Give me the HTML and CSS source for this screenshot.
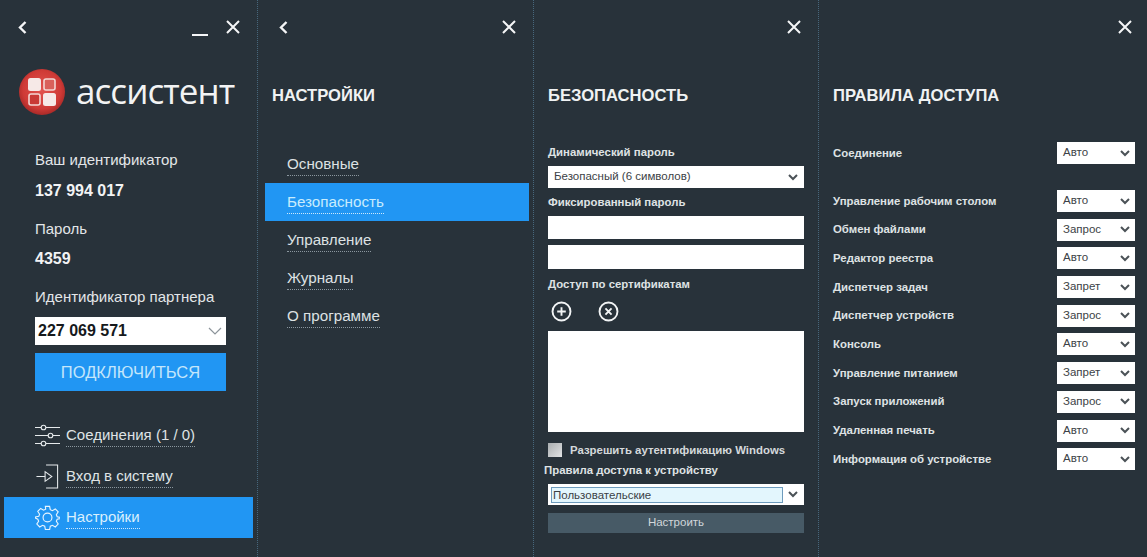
FILE: index.html
```html
<!DOCTYPE html>
<html lang="ru">
<head>
<meta charset="utf-8">
<title>Ассистент</title>
<link rel="stylesheet" href="styles.css">
</head>
<body>
<svg class="defs" width="0" height="0" aria-hidden="true">
  <defs>
    <symbol id="chev" viewBox="0 0 10 7"><path d="M1 1l4 4 4-4" fill="none" stroke="currentColor" stroke-width="2"/></symbol>
    <symbol id="close" viewBox="0 0 14 14"><path d="M1 1l12 12M13 1L1 13" fill="none" stroke="currentColor" stroke-width="2"/></symbol>
    <symbol id="back" viewBox="0 0 9 13"><path d="M7.5 1L2 6.5 7.5 12" fill="none" stroke="currentColor" stroke-width="2.4"/></symbol>
  </defs>
</svg>
<main class="app">
  <section class="panel panel-main">
    <div class="topbar topbar-main">
      <svg class="ico-back"><use href="#back"/></svg>
      <span class="minimize"></span>
      <svg class="ico-close close-main"><use href="#close"/></svg>
    </div>
    <div class="logo">
      <svg class="logo-mark" viewBox="0 0 46 46">
        <defs>
          <radialGradient id="lg" cx="50%" cy="45%" r="55%"><stop offset="0" stop-color="#e2544f"/><stop offset="0.75" stop-color="#cf3a36"/><stop offset="1" stop-color="#a92a28"/></radialGradient>
        </defs>
        <circle cx="23" cy="23" r="23" fill="url(#lg)"/>
        <rect x="9" y="9" width="13" height="13" rx="2.5" fill="#f6e9e7"/>
        <rect x="25" y="10" width="11" height="11" rx="2" fill="#d9615b" stroke="#f3d6d3" stroke-width="1.6"/>
        <rect x="10" y="25" width="11" height="11" rx="2" fill="#c93a36" stroke="#f3d6d3" stroke-width="1.6"/>
        <rect x="24" y="24" width="13" height="13" rx="2.5" fill="#f6e9e7"/>
      </svg>
      <span class="logo-text">ассистент</span>
    </div>
    <div class="info">
      <div class="info-label first">Ваш идентификатор</div>
      <div class="info-value">137 994 017</div>
      <div class="info-label">Пароль</div>
      <div class="info-value">4359</div>
      <div class="info-label">Идентификатор партнера</div>
      <div class="partner">
        <span>227 069 571</span>
        <svg class="partner-chev" viewBox="0 0 14 8"><path d="M1 1l6 6 6-6" fill="none" stroke="currentColor" stroke-width="1.2"/></svg>
      </div>
      <div class="connect">ПОДКЛЮЧИТЬСЯ</div>
    </div>
    <nav class="side-nav">
      <div class="side-item">
        <svg class="side-ico" viewBox="0 0 25 22" fill="none" stroke="#e6eaec" stroke-width="1.1">
          <path d="M0 3h6M11 3h14M0 11h13M18 11h7M0 19h6M11 19h14"/>
          <circle cx="8.5" cy="3" r="2.3"/><circle cx="15.5" cy="11" r="2.3"/><circle cx="8.5" cy="19" r="2.3"/>
        </svg>
        <span class="dotted">Соединения (1 / 0)</span>
      </div>
      <div class="side-item">
        <svg class="side-ico" viewBox="0 0 25 26" fill="none" stroke="#e6eaec" stroke-width="1.1">
          <path d="M11 1h12v24H11M1 13h9"/><path d="M10 8l7 5-7 5z"/>
        </svg>
        <span class="dotted">Вход в систему</span>
      </div>
      <div class="side-item active">
        <svg class="side-ico" viewBox="0 0 26 26" fill="none" stroke="#e8f4fe" stroke-width="1.2">
          <circle cx="13" cy="13" r="4.6"/>
          <path d="M10.8 1.5h4.4l.7 3.4 2.2 1 3-1.8 3 3.1-1.9 2.9.9 2.2 3.4.7v1l-3.4.7-.9 2.2 1.9 2.9-3 3.1-3-1.8-2.2 1-.7 3.4h-4.4l-.7-3.4-2.2-1-3 1.8-3-3.1 1.9-2.9-.9-2.2L.5 13.5v-1l3.4-.7.9-2.2-1.9-2.9 3-3.1 3 1.8 2.2-1z"/>
        </svg>
        <span class="dotted">Настройки</span>
      </div>
    </nav>
  </section>

  <section class="panel panel-settings">
    <div class="topbar topbar-settings">
      <svg class="ico-back"><use href="#back"/></svg>
      <svg class="ico-close"><use href="#close"/></svg>
    </div>
    <h2 class="title title-settings">НАСТРОЙКИ</h2>
    <ul class="menu">
      <li class="menu-item"><span class="dotted">Основные</span></li>
      <li class="menu-item active"><span class="dotted">Безопасность</span></li>
      <li class="menu-item"><span class="dotted">Управление</span></li>
      <li class="menu-item"><span class="dotted">Журналы</span></li>
      <li class="menu-item"><span class="dotted">О программе</span></li>
    </ul>
  </section>

  <section class="panel panel-security">
    <div class="topbar topbar-security">
      <svg class="ico-close"><use href="#close"/></svg>
    </div>
    <h2 class="title">БЕЗОПАСНОСТЬ</h2>
    <div class="form">
      <div class="f-label f-first">Динамический пароль</div>
      <div class="select select-wide"><span>Безопасный (6 символов)</span><svg class="chev"><use href="#chev"/></svg></div>
      <div class="f-label">Фиксированный пароль</div>
      <div class="field field-a"></div>
      <div class="field field-b"></div>
      <div class="f-label f-cert">Доступ по сертификатам</div>
      <div class="cert-tools">
        <svg class="cert-ico" viewBox="0 0 22 22" fill="none" stroke="#f2f4f5" stroke-width="2"><circle cx="11" cy="11" r="9.4"/><path d="M11 6.5v9M6.5 11h9"/></svg>
        <svg class="cert-ico" viewBox="0 0 22 22" fill="none" stroke="#f2f4f5" stroke-width="2"><circle cx="11" cy="11" r="9.4"/><path d="M7.8 7.8l6.4 6.4M14.2 7.8l-6.4 6.4"/></svg>
      </div>
      <div class="cert-list"></div>
      <div class="check-row"><span class="check"></span><span>Разрешить аутентификацию Windows</span></div>
      <div class="f-label f-rules">Правила доступа к устройству</div>
      <div class="select select-focus"><span class="focus-text">Пользовательские</span><svg class="chev"><use href="#chev"/></svg></div>
      <div class="setup">Настроить</div>
    </div>
  </section>

  <section class="panel panel-rules">
    <div class="topbar topbar-rules">
      <svg class="ico-close"><use href="#close"/></svg>
    </div>
    <h2 class="title">ПРАВИЛА ДОСТУПА</h2>
    <div class="rule rule-first"><span class="rule-name">Соединение</span><div class="select select-small"><span>Авто</span><svg class="chev"><use href="#chev"/></svg></div></div>
    <div class="rules">
      <div class="rule"><span class="rule-name">Управление рабочим столом</span><div class="select select-small"><span>Авто</span><svg class="chev"><use href="#chev"/></svg></div></div>
      <div class="rule"><span class="rule-name">Обмен файлами</span><div class="select select-small"><span>Запрос</span><svg class="chev"><use href="#chev"/></svg></div></div>
      <div class="rule"><span class="rule-name">Редактор реестра</span><div class="select select-small"><span>Авто</span><svg class="chev"><use href="#chev"/></svg></div></div>
      <div class="rule"><span class="rule-name">Диспетчер задач</span><div class="select select-small"><span>Запрет</span><svg class="chev"><use href="#chev"/></svg></div></div>
      <div class="rule"><span class="rule-name">Диспетчер устройств</span><div class="select select-small"><span>Запрос</span><svg class="chev"><use href="#chev"/></svg></div></div>
      <div class="rule"><span class="rule-name">Консоль</span><div class="select select-small"><span>Авто</span><svg class="chev"><use href="#chev"/></svg></div></div>
      <div class="rule"><span class="rule-name">Управление питанием</span><div class="select select-small"><span>Запрет</span><svg class="chev"><use href="#chev"/></svg></div></div>
      <div class="rule"><span class="rule-name">Запуск приложений</span><div class="select select-small"><span>Запрос</span><svg class="chev"><use href="#chev"/></svg></div></div>
      <div class="rule"><span class="rule-name">Удаленная печать</span><div class="select select-small"><span>Авто</span><svg class="chev"><use href="#chev"/></svg></div></div>
      <div class="rule"><span class="rule-name">Информация об устройстве</span><div class="select select-small"><span>Авто</span><svg class="chev"><use href="#chev"/></svg></div></div>
    </div>
  </section>
</main>
</body>
</html>
```
FILE: styles.css
```css
* { box-sizing: border-box; }
html, body { margin: 0; padding: 0; height: 100%; }
body {
  background: #28323a;
  color: #e6e9eb;
  font-family: "Liberation Sans", Arial, sans-serif;
  overflow: hidden;
}
.defs { position: absolute; }
.app { display: flex; height: 557px; width: 1147px; }
.panel { height: 100%; }
.panel-main { width: 257px; padding: 0 31px 0 35px; }
.panel-settings { width: 276px; border-left: 1px dotted #47677c; }
.panel-security { width: 285px; border-left: 1px dotted #47677c; padding: 0 14px 0 14px; }
.panel-rules { flex: 1; border-left: 1px dotted #47677c; padding: 0 12px 0 14px; }

.topbar { display: flex; align-items: center; justify-content: space-between; height: 54px; color: #f5f6f7; }
.topbar-main { margin: 0 -14px 0 -17px; }
.topbar-settings { padding: 0 17px 0 21px; }
.topbar-security { justify-content: flex-end; padding-right: 3px; }
.topbar-rules { justify-content: flex-end; padding-right: 3px; }
.ico-back { width: 9px; height: 13px; }
.ico-close { width: 14px; height: 14px; }
.minimize { width: 16px; height: 2px; background: #f5f6f7; margin: 15px 18px 0 auto; }
.close-main { margin-left: 0; }

.logo { display: flex; align-items: center; gap: 11px; margin: 15px 0 0 -16px; height: 46px; }
.logo-mark { width: 46px; height: 46px; flex: none; }
.logo-text { font-family: "Open Sans", sans-serif; font-size: 35px; font-weight: 400; line-height: 44px; padding-bottom: 2px; color: #f2f3f3; letter-spacing: -0.95px; white-space: nowrap; }

.info-label { font-size: 15px; line-height: 20px; margin-top: 18px; color: #e3e6e8; white-space: nowrap; }
.info-label.first { margin-top: 35px; }
.info-value { font-size: 16px; font-weight: 700; line-height: 20px; margin-top: 10.5px; color: #f2f3f4; }
.partner { display: flex; align-items: center; justify-content: space-between; height: 28px; margin-top: 10px; padding: 0 3px; background: #fff; color: #16191c; font-size: 16px; font-weight: 700; }
.partner-chev { width: 14px; height: 8px; color: #8c949a; margin-right: 1px; }
.connect { height: 38px; margin-top: 8px; background: #2196f3; color: #c4e6fb; font-size: 16.5px; line-height: 38px; text-align: center; }

.side-nav { margin: 24px -27px 0 -31px; }
.side-item { display: flex; align-items: center; height: 41px; padding-left: 31px; font-size: 15px; color: #dfe3e5; }
.side-item.active { background: #2196f3; color: #d9effd; }
.side-item .dotted { margin-top: 2px; }
.side-ico { width: 25px; height: 25px; margin-right: 6px; flex: none; }
.dotted { border-bottom: 1px dotted #8b979f; line-height: 18px; padding-bottom: 2px; white-space: nowrap; }
.active .dotted { border-bottom-color: #cbe7fb; }

.title { margin: 32px 0 0; font-size: 16.6px; line-height: 20px; font-weight: 700; color: #f0f2f3; white-space: nowrap; }
.title-settings { margin-left: 14px; }

.menu { list-style: none; margin: 39px 4px 0 7px; padding: 0; }
.menu-item { height: 38px; padding: 2px 0 0 22px; display: flex; align-items: center; font-size: 15.2px; color: #dde1e3; }
.menu-item.active { background: #2196f3; color: #c8ecfd; }

.f-label { font-size: 11.4px; font-weight: 700; line-height: 16px; margin-top: 6px; color: #dfe2e4; white-space: nowrap; }
.f-first { margin-top: 38px; }
.f-cert { margin-top: 7px; }
.f-rules { margin: 5px 0 0 -4px; }
.select { display: flex; align-items: center; justify-content: space-between; background: #fff; color: #3c4246; font-size: 11.5px; }
.select-wide span, .select-small span { padding-bottom: 2px; }
.chev { width: 10px; height: 7px; color: #4b5257; flex: none; }
.select-wide { height: 22px; margin-top: 6px; padding: 0 6px; }
.field { background: #fff; margin-top: 6px; }
.field-a { height: 23px; }
.field-b { height: 24px; }
.cert-tools { display: flex; gap: 26px; margin: 9px 0 0 3px; height: 21px; }
.cert-ico { width: 21px; height: 21px; }
.cert-list { height: 101px; margin-top: 9px; background: #fff; }
.check-row { display: flex; align-items: center; gap: 8px; height: 14px; margin-top: 11px; font-size: 11.4px; font-weight: 700; color: #d5d9dc; white-space: nowrap; }
.check { width: 14px; height: 14px; background: linear-gradient(135deg, #a9adb0, #e2e3e4); flex: none; }
.select-focus { height: 21px; margin-top: 6px; padding: 0 6px 0 3px; }
.focus-text { display: block; width: 232px; height: 16px; padding-left: 1px; line-height: 14px; background: #e3f6fd; border: 1px solid #6d9bbd; color: #3a4146; }
.setup { height: 20px; margin-top: 8px; background: #475a66; color: #d2d7da; font-size: 11.5px; font-weight: 400; line-height: 19px; text-align: center; }

.rule { display: flex; align-items: center; justify-content: space-between; height: 22px; font-size: 11.4px; font-weight: 700; color: #dfe2e4; white-space: nowrap; }
.rule-name { padding-bottom: 1px; }
.rule-first { margin-top: 36px; }
.rules { display: flex; flex-direction: column; gap: 6.7px; margin-top: 26px; }
.select-small { width: 78px; height: 22px; padding: 0 5px 0 6px; font-weight: 400; }
```
